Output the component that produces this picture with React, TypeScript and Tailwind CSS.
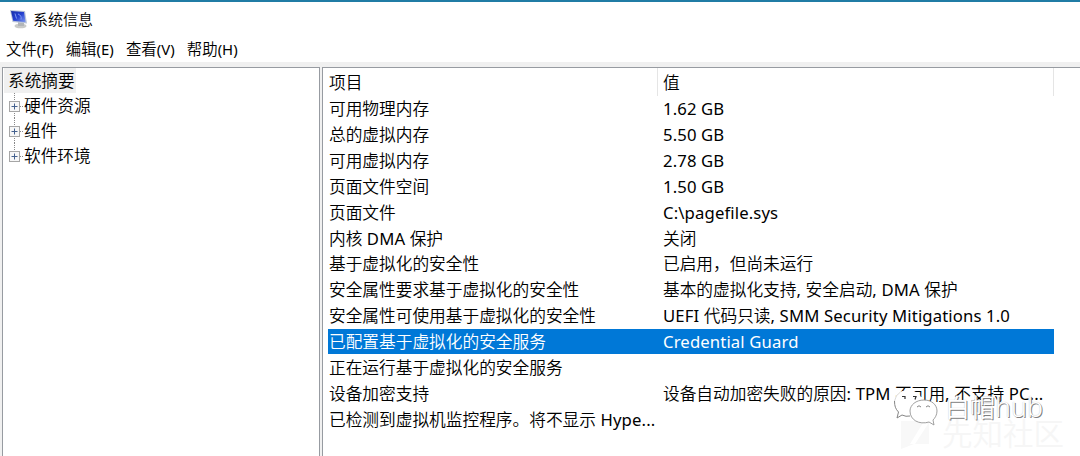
import React from 'react';

const items: [string, string][] = [
  ['可用物理内存', '1.62 GB'],
  ['总的虚拟内存', '5.50 GB'],
  ['可用虚拟内存', '2.78 GB'],
  ['页面文件空间', '1.50 GB'],
  ['页面文件', 'C:\\pagefile.sys'],
  ['内核 DMA 保护', '关闭'],
  ['基于虚拟化的安全性', '已启用，但尚未运行'],
  ['安全属性要求基于虚拟化的安全性', '基本的虚拟化支持, 安全启动, DMA 保护'],
  ['安全属性可使用基于虚拟化的安全性', 'UEFI 代码只读, SMM Security Mitigations 1.0'],
  ['已配置基于虚拟化的安全服务', 'Credential Guard'],
  ['正在运行基于虚拟化的安全服务', ''],
  ['设备加密支持', '设备自动加密失败的原因: TPM 不可用, 不支持 PC...'],
  ['已检测到虚拟机监控程序。将不显示 Hype...', ''],
];

/* Latin runs use their own face and weight beside the Chinese glyphs. */
function Label({ text, latin = 'text-[1em] tracking-[0.13px]' }: { text: string; latin?: string }) {
  return (
    <span className="whitespace-pre">
      {text.split(/([\x20-\x7e]+)/).map((run, i) =>
        i % 2 ? (
          <span key={i} className={`font-['Noto_Sans',sans-serif] font-normal ${latin}`}>{run}</span>
        ) : (
          run
        ),
      )}
    </span>
  );
}

function ComputerIcon() {
  return (
    <svg className="h-[20px] w-[20px]" viewBox="0 0 20 20">
      <defs>
        <linearGradient id="screen" x1="0" y1="0" x2="1" y2="1">
          <stop offset="0" stopColor="#1830a8" />
          <stop offset=".5" stopColor="#2440d0" />
          <stop offset="1" stopColor="#7f9af0" />
        </linearGradient>
      </defs>
      <ellipse cx="10.5" cy="17" rx="6" ry="2.3" fill="#c9cac8" />
      <path d="M8 13l6 1v3H8z" fill="#b2b5b8" />
      <path d="M0 1l15 1 2 12.5L2.500 13z" fill="#b9c3d6" />
      <path d="M1 2l13 1 1.600 10.200L3.200 11.800z" fill="url(#screen)" />
      <path d="M5 4.500l1.500 5M8 5q4 1.500 3 5.500" stroke="#8ba4f5" strokeWidth=".9" fill="none" />
    </svg>
  );
}

function Expander() {
  return (
    <svg className="relative h-[11px] w-[11px]" viewBox="0 0 11 11">
      <rect x=".5" y=".5" width="10" height="10" fill="#f7f7f7" stroke="#a6a6a6" />
      <path d="M2.5 5.5h6M5.5 2.5v6" stroke="#44618e" />
    </svg>
  );
}

function Branch({ text }: { text: string }) {
  return (
    <div className="flex h-[25px] items-center">
      <div className="relative flex h-full w-[20px] items-center pt-[2px] pl-[5px]">
        <span className="absolute top-0 left-[10px] h-[13px] border-l border-dotted border-[#888]" />
        {text !== '软件环境' && (
          <span className="absolute top-[13px] left-[10px] h-[12px] border-l border-dotted border-[#888]" />
        )}
        <Expander />
        <span className="w-[3px] border-t border-dotted border-[#888]" />
      </div>
      <Label text={text} />
    </div>
  );
}

function Watermarks() {
  return (
    <div className="pointer-events-none absolute top-[384px] left-[890px] h-[72px] w-[190px]">
      <svg className="absolute top-[35px] left-[10px] h-[32px] w-[34px]" viewBox="0 0 34 32">
        <path d="M1 2h28v23H14L1 30zM23 4L10 25h5L28 5z" fill="#f8f8f8" fillRule="evenodd" />
      </svg>
      <span className="absolute top-[29px] left-[52px] text-[30.5px] leading-[38px] whitespace-nowrap text-[#f6f6f6]">
        先知社区
      </span>
      <svg className="absolute top-0 left-0 h-[44px] w-[50px]" viewBox="0 0 50 44" fill="white">
        <path d="M18 6c8 0 14 5 14 11-8 0-14 7-12 15-3 1-6 0-8-1l-5 3 1-6c-3-2-4-6-4-9 0-8 6-13 14-13Z" />
        <path d="M4.500 17c0 5 1 8 4 11l-1.500 6 5-3q4 2 8 1" fill="none" stroke="#858585" />
        <path d="M4.500 17q1-6 6-9" fill="none" stroke="#d0d0d0" strokeWidth=".8" />
        <path d="M34 16c8 0 13 5 13 11 0 4-2 7-4 9l1 5-5-3c-10 3-19-2-19-11 0-6 6-11 14-11Z" stroke="#969696" strokeWidth=".9" />
        <path d="M12 12.500h3v2.500M23 12.500h3l-1 3" fill="none" stroke="#333" strokeWidth="1.2" />
        <path d="M27 23q2-2.500 4 0M36 23q2-2.500 4 0" fill="none" stroke="#858585" />
      </svg>
      <span className="absolute top-[3px] left-[55px] text-[25px] leading-[38px] whitespace-nowrap text-white [text-shadow:1px_1px_0_#808080,0_0_1px_#bbb]">
        白帽<span className="font-['Noto_Sans',sans-serif] text-[26.8px]">hub</span>
      </span>
    </div>
  );
}

export default function App() {
  return (
    <div className="relative flex h-[456px] w-[1080px] flex-col overflow-hidden bg-white font-['Noto_Sans_CJK_SC',sans-serif] text-[16.7px] leading-[25px] font-[350] text-black">
      <header className="flex h-[36px] shrink-0 items-center gap-[4px] border-t-2 border-[#207ca5] pl-[10px] text-[15px]">
        <ComputerIcon />
        <span className="-ml-[1px] pb-[2px]"><Label text="系统信息" /></span>
      </header>
      <nav className="flex h-[26px] shrink-0 items-center gap-[12.2px] pl-[6px] text-[15.4px]">
        {['文件(F)', '编辑(E)', '查看(V)', '帮助(H)'].map((m) => (
          <Label key={m} text={m} latin="text-[0.97em]" />
        ))}
      </nav>
      <div className="flex min-h-0 flex-1 gap-[2px] bg-[#f0f0f0] pt-[5px] pl-[2px]">
        <aside className="w-[318px] shrink-0 border border-b-0 border-[#979ba1] bg-white pl-[1px]">
          <div className="flex h-[25px] w-[72px] items-center bg-[#f0f0f0] pl-[4px]">
            <Label text="系统摘要" />
          </div>
          {['硬件资源', '组件', '软件环境'].map((t) => (
            <Branch key={t} text={t} />
          ))}
        </aside>
        <main className="flex-1 border-t border-l border-[#979ba1] bg-white pl-[5px]">
          <div className="flex h-[28px] w-[726px] items-center border-r border-[#e5e5e5]">
            <div className="flex h-full w-[330px] items-center border-r border-[#e5e5e5] pl-[1px]">项目</div>
            <div className="pl-[5px]">值</div>
          </div>
          {items.map(([name, value], i) => (
            <div
              key={name}
              className={`flex h-[25.85px] w-[726px] items-center ${i === 9 ? 'bg-[#0078d7] text-white' : ''}`}
            >
              <div className="w-[335px] pl-[1px]"><Label text={name} /></div>
              <Label text={value} />
            </div>
          ))}
        </main>
      </div>
      <Watermarks />
    </div>
  );
}
